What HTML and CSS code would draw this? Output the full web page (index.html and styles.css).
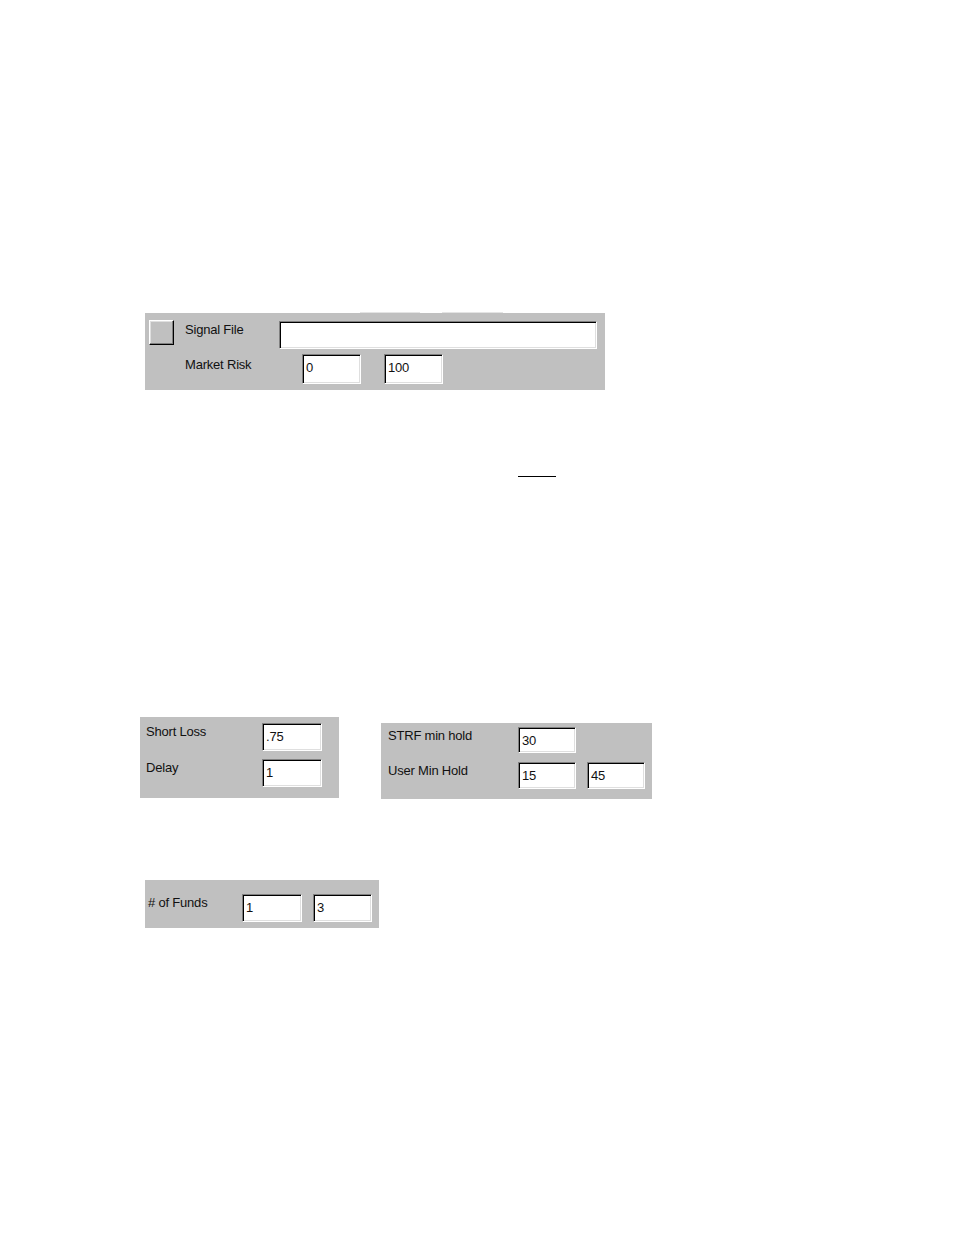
FILE: index.html
```html
<!DOCTYPE html>
<html>
<head>
<meta charset="utf-8">
<title>Settings</title>
<link rel="stylesheet" href="styles.css">
</head>
<body>
<div class="page">
  <div class="panel panel-signal">
    <div class="notch notch-a"></div>
    <div class="notch notch-b"></div>
    <div class="row row-signal">
      <div class="btn"></div>
      <div class="label label-signal">Signal File</div>
      <div class="field field-wide"></div>
    </div>
    <div class="row row-risk">
      <div class="label label-risk">Market Risk</div>
      <div class="field field-risk">0</div>
      <div class="field field-risk">100</div>
    </div>
  </div>

  <div class="underline"></div>

  <div class="pair">
    <div class="panel panel-loss">
      <div class="row">
        <div class="label label-loss">Short Loss</div>
        <div class="field field-loss">.75</div>
      </div>
      <div class="row row-delay">
        <div class="label label-loss">Delay</div>
        <div class="field field-loss">1</div>
      </div>
    </div>
    <div class="panel panel-hold">
      <div class="row">
        <div class="label label-hold">STRF min hold</div>
        <div class="field field-hold">30</div>
      </div>
      <div class="row row-user">
        <div class="label label-hold">User Min Hold</div>
        <div class="field field-hold">15</div>
        <div class="field field-hold field-max">45</div>
      </div>
    </div>
  </div>

  <div class="panel panel-funds">
    <div class="row">
      <div class="label label-funds"># of Funds</div>
      <div class="field field-funds">1</div>
      <div class="field field-funds field-funds2">3</div>
    </div>
  </div>
</div>
</body>
</html>
```

FILE: styles.css
```css
html, body {
  margin: 0;
  padding: 0;
  background: #ffffff;
}

body {
  font-family: "Liberation Sans", Arial, sans-serif;
  font-size: 13px;
  line-height: 15px;
  color: #111;
}

.page {
  display: flex;
  flex-direction: column;
  align-items: flex-start;
  padding-top: 313px;
}

.panel {
  background: #c0c0c0;
  box-sizing: border-box;
}

.panel-signal {
  position: relative;
}

.notch {
  position: absolute;
  top: -1px;
  height: 1px;
  background: #e4e4e4;
}

.notch-a {
  left: 215px;
  width: 60px;
}

.notch-b {
  left: 297px;
  width: 61px;
}

.row {
  display: flex;
  align-items: flex-start;
}

.label {
  letter-spacing: -0.2px;
  white-space: nowrap;
}

.field {
  box-sizing: border-box;
  background: #fff;
  border: 1px solid;
  border-color: #808080 #ffffff #ffffff #808080;
  box-shadow: inset 1px 1px 0 #000, inset -1px -1px 0 #dfdfdf;
  padding: 5px 0 0 3px;
  letter-spacing: -0.2px;
}

.btn {
  box-sizing: border-box;
  width: 25px;
  height: 25px;
  background: #c0c0c0;
  border: 1px solid;
  border-color: #ffffff #000 #000 #ffffff;
  box-shadow: inset -1px -1px 0 #808080, inset 1px 1px 0 #dfdfdf;
}

/* Signal panel */
.panel-signal {
  margin-left: 145px;
  width: 460px;
  height: 77px;
  padding: 7px 0 0 4px;
}

.label-signal {
  width: 94px;
  margin-left: 11px;
  margin-top: 2px;
}

.field-wide {
  width: 318px;
  height: 28px;
  margin-top: 1px;
}

.row-risk {
  margin-top: 5px;
  padding-left: 36px;
}

.label-risk {
  width: 117px;
  margin-top: 3px;
}

.field-risk {
  width: 59px;
  height: 30px;
  margin-right: 23px;
}

.underline {
  margin: 86px 0 0 518px;
  width: 38px;
  height: 1px;
  background: #000;
}

/* Pair of panels */
.pair {
  display: flex;
  align-items: flex-start;
  margin-top: 240px;
}

.panel-loss {
  margin-left: 140px;
  width: 199px;
  height: 81px;
  padding: 6px 0 0 6px;
}

.label-loss {
  width: 116px;
  margin-top: 1px;
}

.field-loss {
  width: 60px;
  height: 28px;
}

.row-delay {
  margin-top: 8px;
}

.panel-hold {
  margin-left: 42px;
  margin-top: 6px;
  width: 271px;
  height: 76px;
  padding: 4px 0 0 7px;
}

.label-hold {
  width: 130px;
  margin-top: 1px;
}

.field-hold {
  width: 58px;
  height: 26px;
}

.row-user {
  margin-top: 9px;
}

.row-user .field-hold {
  height: 27px;
}

.field-max {
  margin-left: 11px;
}

/* Funds panel */
.panel-funds {
  margin-left: 145px;
  margin-top: 81px;
  width: 234px;
  height: 48px;
  padding: 14px 0 0 3px;
}

.label-funds {
  width: 94px;
  margin-top: 1px;
}

.field-funds {
  width: 60px;
  height: 28px;
}

.field-funds2 {
  width: 59px;
  margin-left: 11px;
}
```
